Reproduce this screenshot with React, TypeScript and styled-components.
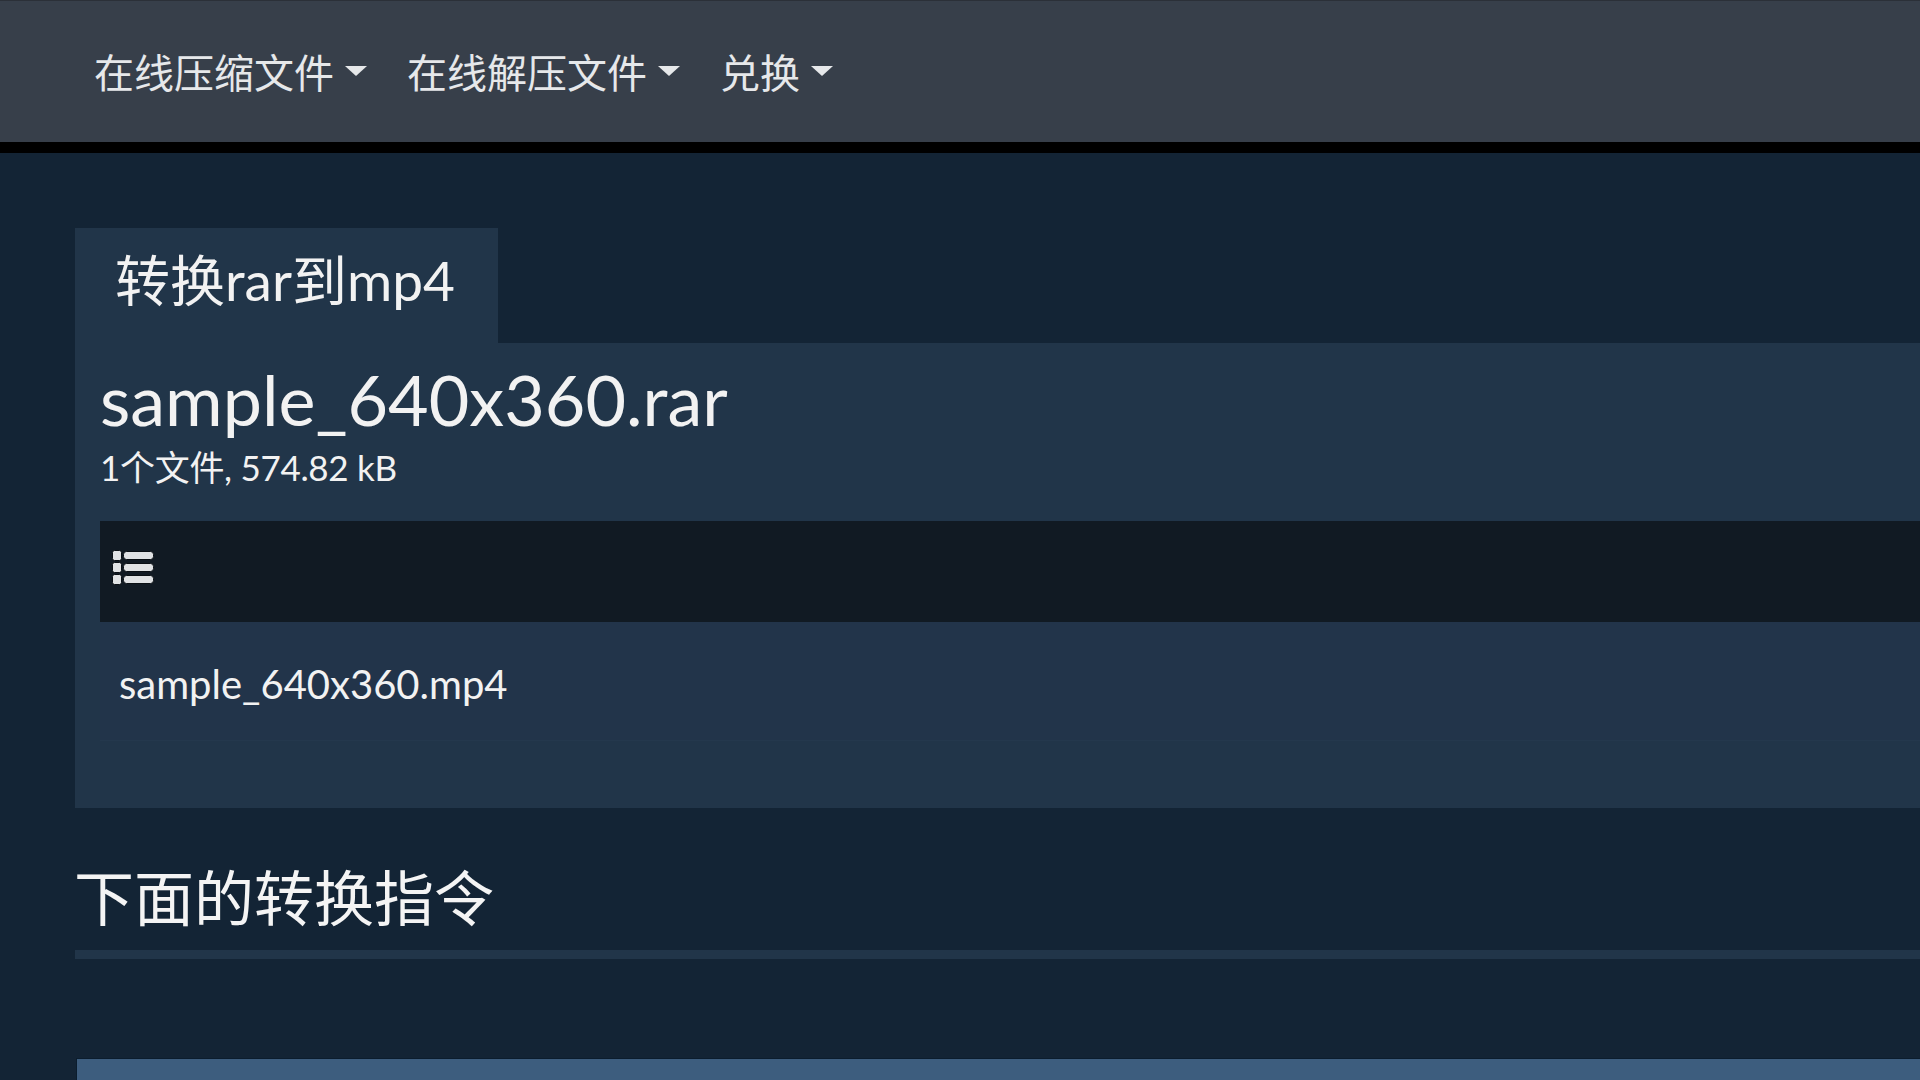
import styled, { createGlobalStyle } from "styled-components";

const GlobalStyle = createGlobalStyle`
  html, body {
    margin: 0;
    padding: 0;
    background: #132435;
    overflow: hidden;
  }
  body {
    font-family: Lato, "Noto Sans CJK SC", sans-serif;
    color: #f2f2f2;
  }
`;

const Page = styled.div`
  width: 1920px;
  height: 1080px;
  overflow: hidden;
  background: #132435;
`;

const Navbar = styled.nav`
  height: 141px;
  background: #373f4a;
  border-top: 1px solid #2b3038;
  border-bottom: 11px solid #000;
  display: flex;
  align-items: center;
  padding-left: 94px;
  gap: 40px;
`;

const NavItem = styled.div`
  display: flex;
  align-items: center;
  font-family: "Noto Sans CJK SC", sans-serif;
  font-size: 40px;
  color: #e6e8ea;
  margin-top: -2px;
`;

const Caret = styled.span`
  width: 0;
  height: 0;
  margin-left: 11px;
  border-left: 11px solid transparent;
  border-right: 11px solid transparent;
  border-top: 10px solid #e6e8ea;
`;

const Main = styled.main`
  padding-left: 75px;
`;

const Tab = styled.div`
  margin-top: 75px;
  width: 423px;
  height: 115px;
  box-sizing: border-box;
  padding: 0 0 18px 40px;
  display: flex;
  align-items: center;
  background: #213549;
  font-size: 55px;
  font-family: Lato, "Noto Sans CJK SC", sans-serif;
`;

const Panel = styled.section`
  background: #213549;
  padding: 16px 0 66px 25px;
  height: 465px;
  box-sizing: border-box;
`;

const FileName = styled.h2`
  margin: 0;
  font-size: 70px;
  font-weight: 400;
  line-height: 80px;
`;

const FileMeta = styled.div`
  font-size: 35px;
  line-height: 40px;
  margin-top: 8px;
  letter-spacing: -0.3px;
`;

const ListBar = styled.div`
  margin-top: 34px;
  height: 101px;
  box-sizing: border-box;
  background: #111a23;
  display: flex;
  align-items: center;
  padding: 0 0 8px 12px;
`;

const ListRow = styled.div`
  height: 119px;
  box-sizing: border-box;
  background: #22344a;
  display: flex;
  align-items: center;
  padding: 6px 0 0 19px;
  font-size: 40px;
  border-bottom: 1px solid #24384d;
`;

const SectionTitle = styled.h3`
  margin: 54px 0 0 -1px;
  font-family: "Noto Sans CJK SC", sans-serif;
  font-size: 60px;
  font-weight: 400;
  line-height: 66px;
  color: #f4f4f4;
`;

const Divider = styled.div`
  margin-top: 22px;
  height: 9px;
  background: #213549;
`;

const CommandBar = styled.div`
  margin: 99px 0 0 1px;
  height: 40px;
  background: #3d5d7e;
  border-top: 1px solid #0b1d2e;
  border-left: 1px solid #0b1d2e;
`;

const ListIcon = () => (
  <svg width="42" height="36" viewBox="0 0 42 36">
    {[0, 12, 24].map((y) => (
      <g key={y} fill="#e0e2e4" stroke="#0a0f14" strokeWidth="1">
        <rect x="0.5" y={y + 0.5} width="9" height="10" rx="2" />
        <rect x="11.5" y={y + 1.5} width="30" height="8" rx="3" />
      </g>
    ))}
  </svg>
);

export default function App() {
  return (
    <Page>
      <GlobalStyle />
      <Navbar>
        <NavItem>
          在线压缩文件
          <Caret />
        </NavItem>
        <NavItem>
          在线解压文件
          <Caret />
        </NavItem>
        <NavItem>
          兑换
          <Caret />
        </NavItem>
      </Navbar>
      <Main>
        <Tab>转换rar到mp4</Tab>
        <Panel>
          <FileName>sample_640x360.rar</FileName>
          <FileMeta>1个文件, 574.82 kB</FileMeta>
          <ListBar>
            <ListIcon />
          </ListBar>
          <ListRow>sample_640x360.mp4</ListRow>
        </Panel>
        <SectionTitle>下面的转换指令</SectionTitle>
        <Divider />
        <CommandBar />
      </Main>
    </Page>
  );
}
